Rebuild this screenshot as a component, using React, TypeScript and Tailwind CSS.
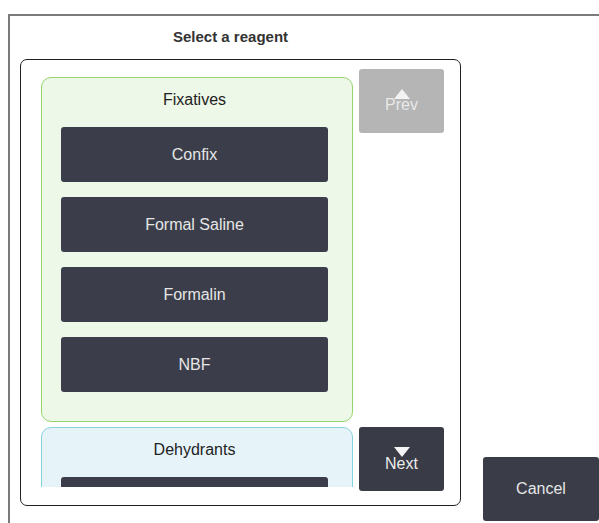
type Group = {
  name: string;
  items: string[];
  box: string;
};

// only the top of the first Dehydrants button shows, so it carries no label
const groups: Group[] = [
  {
    name: 'Fixatives',
    items: ['Confix', 'Formal Saline', 'Formalin', 'NBF'],
    box: 'border-[#94d66c] bg-[#eef8e8]',
  },
  {
    name: 'Dehydrants',
    items: [''],
    box: 'border-[#84d2e0] bg-[#e6f4fa]',
  },
];

function Triangle({ down, color }: { down?: boolean; color: string }) {
  return (
    <svg width="16" height="10" viewBox="0 0 16 10" className="block">
      <polygon points={down ? '0,0 16,0 8,10' : '8,0 16,10 0,10'} fill={color} />
    </svg>
  );
}

export default function App() {
  return (
    <div className="h-[523px] w-[599px] overflow-hidden bg-white font-['Liberation_Sans',Arial,sans-serif]">
      <div className="ml-2 mt-[14px] h-[560px] w-[640px] border-2 border-[#7b7b7b]">
        <div className="ml-[163px] mt-[12px] mb-[13px] h-[18px] text-[15px] font-bold leading-[18px] text-[#333]">
          Select a reagent
        </div>

        <div className="flex items-start">
          <div className="ml-[10px] flex h-[447px] w-[441px] rounded-[7px] border border-[#222] pl-[20px]">
            <div className="mt-[17px] flex h-[410px] w-[312px] flex-col gap-[5px] overflow-hidden">
              {groups.map((group) => (
                <div
                  key={group.name}
                  className={`shrink-0 rounded-[10px] border pl-[19px] pb-[29px] ${group.box}`}
                >
                  <div className="mt-[13px] mb-[18px] h-[18px] w-[267px] text-center text-[16px] leading-[18px] text-[#222]">
                    {group.name}
                  </div>
                  <div className="flex flex-col gap-[15px]">
                    {group.items.map((item, i) => (
                      <div
                        key={`${group.name}-${i}`}
                        className="flex h-[55px] w-[267px] items-center justify-center rounded-[3px] bg-[#3b3e4a] text-[16px] text-[#e6e6e6]"
                      >
                        {item}
                      </div>
                    ))}
                  </div>
                </div>
              ))}
            </div>

            <div className="ml-[6px] flex h-full w-[85px] flex-col justify-between pt-[9px] pb-[14px]">
              <div className="flex h-[64px] flex-col items-center justify-center rounded-[3px] bg-[#b5b5b5] text-[16px] leading-[16px] text-[#e8e8e8]">
                <Triangle color="#f2f2f2" />
                <span className="-mt-[2px]">Prev</span>
              </div>
              <div className="flex h-[64px] flex-col items-center justify-center rounded-[3px] bg-[#393b46] text-[16px] leading-[16px] text-[#ececec]">
                <Triangle down color="#f4f4f4" />
                <span className="-mt-[1px]">Next</span>
              </div>
            </div>
          </div>

          <div className="ml-[22px] mt-[398px] flex h-[64px] w-[116px] items-center justify-center rounded-[3px] bg-[#3a3c47] text-[16px] text-[#e6e6e6]">
            Cancel
          </div>
        </div>
      </div>
    </div>
  );
}
